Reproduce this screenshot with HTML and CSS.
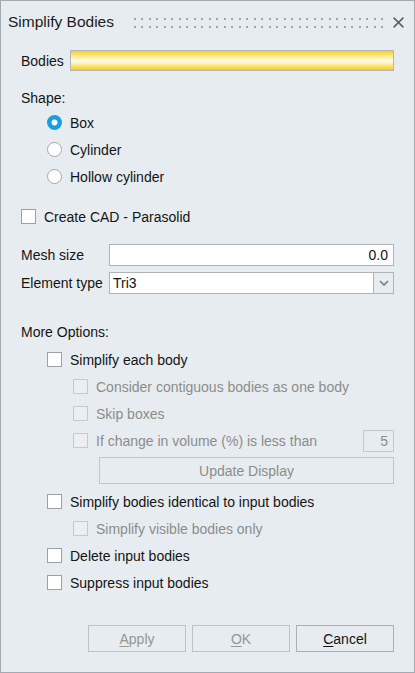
FILE: index.html
```html
<!DOCTYPE html>
<html>
<head>
<meta charset="utf-8">
<link rel="stylesheet" href="styles.css">
</head>
<body>
<div class="window">
  <div class="titlebar">
    <span class="title">Simplify Bodies</span>
    <svg class="grip" width="250" height="12" viewBox="0 0 250 12">
      <defs>
        <pattern id="dots" x="0" y="2" width="15" height="8" patternUnits="userSpaceOnUse">
          <rect x="0" y="0" width="2" height="2" fill="#a2a5a8"/>
          <rect x="7" y="0" width="2" height="2" fill="#a2a5a8"/>
        </pattern>
      </defs>
      <rect x="0" y="0" width="250" height="12" fill="url(#dots)"/>
    </svg>
    <svg class="close" width="11" height="11" viewBox="0 0 11 11">
      <path d="M0.6 0.6 L10.4 10.4 M10.4 0.6 L0.6 10.4" stroke="#5b5f62" stroke-width="1.5" fill="none"/>
    </svg>
  </div>

  <div class="content">
    <div class="bodies-row">
      <span class="bodies-label">Bodies</span>
      <div class="selector"></div>
    </div>

    <div class="section-label shape-label">Shape:</div>
    <div class="radio-group">
      <div class="opt lvl1"><span class="radio checked"></span><span>Box</span></div>
      <div class="opt lvl1"><span class="radio"></span><span>Cylinder</span></div>
      <div class="opt lvl1"><span class="radio"></span><span>Hollow cylinder</span></div>
    </div>

    <div class="opt cad"><span class="check"></span><span>Create CAD - Parasolid</span></div>

    <div class="field mesh">
      <span class="field-label">Mesh size</span>
      <div class="input num">0.0</div>
    </div>
    <div class="field etype">
      <span class="field-label">Element type</span>
      <div class="select">
        <span class="select-value">Tri3</span>
        <span class="select-arrow">
          <svg width="10" height="6" viewBox="0 0 10 6"><path d="M1 1 L5 5 L9 1" stroke="#7a7d80" stroke-width="1.6" fill="none"/></svg>
        </span>
      </div>
    </div>

    <div class="section-label more-label">More Options:</div>
    <div class="group first-group">
      <div class="opt lvl1"><span class="check"></span><span>Simplify each body</span></div>
      <div class="opt lvl2 disabled"><span class="check"></span><span>Consider contiguous bodies as one body</span></div>
      <div class="opt lvl2 disabled"><span class="check"></span><span>Skip boxes</span></div>
      <div class="opt lvl2 disabled"><span class="check"></span><span>If change in volume (%) is less than</span><div class="input small">5</div></div>
    </div>
    <div class="update-btn">Update Display</div>
    <div class="group second-group">
      <div class="opt lvl1"><span class="check"></span><span>Simplify bodies identical to input bodies</span></div>
      <div class="opt lvl2 disabled"><span class="check"></span><span>Simplify visible bodies only</span></div>
      <div class="opt lvl1"><span class="check"></span><span>Delete input bodies</span></div>
      <div class="opt lvl1"><span class="check"></span><span>Suppress input bodies</span></div>
    </div>

    <div class="buttons">
      <div class="btn disabled"><u>A</u>pply</div>
      <div class="btn disabled"><u>O</u>K</div>
      <div class="btn"><u>C</u>ancel</div>
    </div>
  </div>
</div>
</body>
</html>
```
FILE: styles.css
```css
html, body {
  margin: 0;
  padding: 0;
}
body {
  font-family: "Liberation Sans", Arial, sans-serif;
  font-size: 14px;
  color: #141414;
  background: #e6ecef;
}
.window {
  width: 415px;
  height: 673px;
  box-sizing: border-box;
  border: 1px solid #a4abb0;
  background: #e6ecef;
  display: flex;
  flex-direction: column;
}
.titlebar {
  height: 42px;
  flex: none;
  display: flex;
  align-items: center;
  padding-left: 7px;
}
.title {
  font-size: 15.5px;
  color: #1b1b1b;
}
.grip {
  margin-left: 20px;
  flex: none;
}
.close {
  margin-left: 9px;
  flex: none;
}
.content {
  padding: 0 20px;
  display: flex;
  flex-direction: column;
}
.bodies-row {
  margin-top: 7px;
  height: 21px;
  display: flex;
  align-items: center;
}
.bodies-label {
  width: 49px;
  flex: none;
}
.selector {
  flex: 1;
  height: 21px;
  box-sizing: border-box;
  border: 1px solid #b3b6b8;
  background: linear-gradient(#f6cf10 0%, #fbe57a 22%, #fffbe2 48%, #fff6c6 62%, #fbe06a 82%, #f5cc08 100%);
}
.section-label {
  height: 20px;
  line-height: 20px;
}
.shape-label {
  margin-top: 17px;
}
.radio-group {
  margin-top: 1px;
  display: flex;
  flex-direction: column;
}
.opt {
  height: 27px;
  display: flex;
  align-items: center;
  gap: 8px;
  flex: none;
}
.lvl1 {
  padding-left: 26px;
}
.lvl2 {
  padding-left: 52px;
}
.radio {
  width: 15px;
  height: 15px;
  box-sizing: border-box;
  border-radius: 50%;
  border: 1px solid #a3a6a9;
  background: #fff;
  flex: none;
  position: relative;
  margin-top: -1px;
}
.radio.checked {
  border: none;
  background: radial-gradient(circle, #fff 0, #fff 2.6px, #169fe3 3.4px);
}
.check {
  width: 15px;
  height: 15px;
  box-sizing: border-box;
  border: 1px solid #9ea1a4;
  background: #fff;
  flex: none;
}
.disabled {
  color: #8c8c8c;
}
.disabled .check {
  border-color: #c6c8ca;
  background: #eceeef;
}
.cad {
  margin-top: 16px;
  height: 21px;
}
.field {
  height: 22px;
  display: flex;
  align-items: center;
}
.mesh {
  margin-top: 17px;
}
.etype {
  margin-top: 6px;
}
.field-label {
  width: 88px;
  flex: none;
}
.input {
  height: 22px;
  box-sizing: border-box;
  border: 1px solid #b1b4b6;
  background: #fff;
  display: flex;
  align-items: center;
}
.input.num {
  flex: 1;
  justify-content: flex-end;
  padding-right: 5px;
}
.select {
  flex: 1;
  height: 22px;
  box-sizing: border-box;
  border: 1px solid #b1b4b6;
  display: flex;
}
.select-value {
  flex: 1;
  background: #fff;
  padding-left: 3px;
  display: flex;
  align-items: center;
}
.select-arrow {
  width: 19px;
  flex: none;
  border-left: 1px solid #b1b4b6;
  display: flex;
  align-items: center;
  justify-content: center;
}
.more-label {
  margin-top: 28px;
}
.group {
  display: flex;
  flex-direction: column;
}
.first-group {
  margin-top: 4px;
}
.input.small {
  width: 31px;
  margin-left: auto;
  justify-content: flex-end;
  padding-right: 5px;
  background: transparent;
  border-color: #c6c8ca;
  color: #8c8c8c;
}
.update-btn {
  margin-top: 3px;
  margin-left: 78px;
  height: 27px;
  box-sizing: border-box;
  border: 1px solid #c3c5c7;
  color: #8c8c8c;
  display: flex;
  align-items: center;
  justify-content: center;
}
.second-group {
  margin-top: 4px;
}
.buttons {
  margin-top: 29px;
  display: flex;
  justify-content: flex-end;
  gap: 6px;
}
.btn {
  width: 98px;
  height: 27px;
  box-sizing: border-box;
  border: 1px solid #adb0b2;
  display: flex;
  align-items: center;
  justify-content: center;
  color: #141414;
}
.btn.disabled {
  border-color: #bfc2c4;
  color: #969696;
}
.btn u {
  text-decoration: underline;
  text-underline-offset: 2px;
}
```
